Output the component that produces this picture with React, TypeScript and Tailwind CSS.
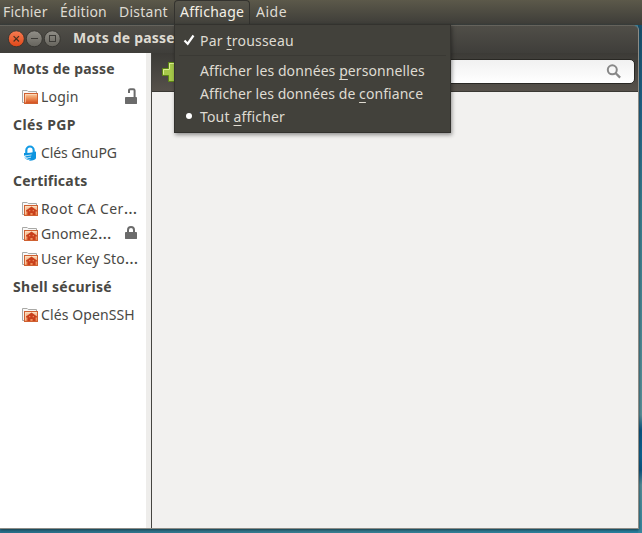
import type { ReactNode } from "react";

function Folder({ home = false }: { home?: boolean }) {
  return (
    <svg width="16" height="16" viewBox="0 0 16 16" className="shrink-0">
      <defs>
        <linearGradient id="folder" x1="0" y1="0" x2="0" y2="1">
          <stop offset="0" stopColor="#f9d0aa" />
          <stop offset="0.45" stopColor="#ee955c" />
          <stop offset="1" stopColor="#d24a1c" />
        </linearGradient>
        <linearGradient id="folder-home" x1="0" y1="0" x2="0" y2="1">
          <stop offset="0" stopColor="#fadcbc" />
          <stop offset="1" stopColor="#ea8048" />
        </linearGradient>
      </defs>
      <path d="M.5 13.5v-12h4.7l1 1h8.3V5" fill="#f8f8f8" stroke="#a9a9a6" />
      <path d="M.5 13.5H3" stroke="#a9a9a6" />
      <rect x="2.5" y="4.5" width="13" height="10" fill={home ? "url(#folder-home)" : "url(#folder)"} stroke="#cf6131" />
      <path d="M3.5 13.5v-8h11" fill="none" stroke="#ffe4c8" strokeOpacity=".6" />
      {home && <path d="M9.5 5.5 4 9.6v1h1.4V14h3v-2h2.2v2h3v-3.4H15v-1Z" fill="#c9401c" />}
      {home && <path d="M7 9.7h1.3m2.4 0H12" stroke="#eb9a6a" />}
    </svg>
  );
}

function GpgIcon() {
  return (
    <svg width="16" height="16" viewBox="0 0 16 16" className="shrink-0">
      <path d="M4.3 8V5.4a3.7 3.9 0 0 1 7.4 0V8" fill="none" stroke="#139be5" strokeWidth="2.2" />
      <path d="M2 8c4.2 0 8-.4 12-1.5v6.8c-.6 1.5-3.5 2.5-7.2 2.3l2-1-5 .1 2.4-1.2H2.6l2.5-1.3H2l2.5-1.4H2Z" fill="#0d94df" />
      <path d="m2.5 11 7-1.1M4 13.2l5-1.1" stroke="#fff" strokeWidth=".7" />
    </svg>
  );
}

function Lock({ open = false }: { open?: boolean }) {
  return (
    <svg width="12" height="18" viewBox="0 0 12 18" className="shrink-0">
      <path d={open ? "M4 5V2.6q0-1.4 1.4-1.4h2.8q1.4 0 1.4 1.4V10" : "M3 8V5a3 3 0 0 1 6 0v3"} fill="none" stroke="#6b6b6b" strokeWidth="2" />
      <rect y={open ? 9 : 7} width="12" height="7" rx=".4" fill="#6b6b6b" />
    </svg>
  );
}

function Heading({ children, spacing }: { children: ReactNode; spacing: string }) {
  return (
    <div className={`flex h-[31px] items-center pl-[13px] font-bold ${spacing}`}>{children}</div>
  );
}

type ItemProps = { icon: ReactNode; label: string; spacing: string; cut?: boolean; lock?: ReactNode };

function Item({ icon, label, spacing, cut = false, lock }: ItemProps) {
  return (
    <div className="flex h-[25px] items-center pl-[22px]">
      {icon}
      <span className={`ml-[3px] ${spacing}`}>
        {label}
        {cut && <span className="text-[17px] leading-none tracking-normal">…</span>}
      </span>
      {lock && <span className="mr-[9px] ml-auto">{lock}</span>}
    </div>
  );
}

function WindowButton({ kind }: { kind: "close" | "min" | "max" }) {
  return (
    <svg width="18" height="18" viewBox="0 0 18 18">
      <defs>
        <linearGradient id={`button-${kind}`} x1="0" y1="0" x2="0" y2="1">
          <stop offset="0" stopColor={kind === "close" ? "#f77c52" : "#918f88"} />
          <stop offset="1" stopColor={kind === "close" ? "#df4718" : "#65635c"} />
        </linearGradient>
      </defs>
      <circle cx="9.3" cy="8.8" r="8" fill={`url(#button-${kind})`} stroke="#34332f" strokeWidth=".9" />
      {kind === "close" && <path d="m6.6 6.1 5.4 5.4m0-5.4-5.4 5.4" stroke="#49301f" strokeWidth="1.2" />}
      {kind === "min" && <path d="M6 8.5h7" stroke="#3c3b37" />}
      {kind === "max" && <rect x="6.5" y="5.5" width="6" height="6" fill="none" stroke="#3c3b37" />}
    </svg>
  );
}

function Key({ children }: { children: string }) {
  return <span className="underline decoration-1 underline-offset-[3px] [text-decoration-skip-ink:none]">{children}</span>;
}

export default function App() {
  return (
    <div className="relative h-[533px] w-[642px] overflow-hidden bg-gradient-to-r from-[#28708c] via-[#397f93] to-[#2780a0] font-['Noto_Sans','Open_Sans',sans-serif] text-[14px] leading-[20px] whitespace-nowrap text-[#494844]">
      <div className="absolute top-[25px] right-0 h-[508px] w-[4px] bg-[linear-gradient(to_bottom,#174d6a_0,#205f85_80px,#397a8c_180px,#5b8e98_390px,#095281_405px,#0b6191_430px,#095281_445px,#568b97_460px,#34869f_508px)]" />
      <nav className="flex h-[25px] items-center bg-gradient-to-b from-[#5c594a] to-[#3d3c38] pb-[2px] pl-[3px] text-[#dfdbd2]">
        <span className="w-[57px] tracking-[0.15px]">Fichier</span>
        <span className="w-[59px] tracking-[0.15px]">Édition</span>
        <span className="w-[55px] tracking-[0.25px]">Distant</span>
        <span className="-mb-[2px] h-[25px] w-[76px] rounded-t-[4px] border border-b-0 border-[#33322e] bg-gradient-to-b from-[#57554b] to-[#42413b] pt-px pl-[5px] tracking-[0.25px] text-[#f4f0e6]">Affichage</span>
        <span className="pl-[6px] tracking-[0.5px]">Aide</span>
      </nav>
      <div className="relative flex h-[504px] w-[639px] flex-col rounded-tr-[5px] border-r border-b border-[#8d8c86] shadow-[0_1px_3px_#173946]">
        <header className="flex h-[28px] shrink-0 items-center rounded-tr-[5px] border-t border-[#65635c] bg-gradient-to-b from-[#504e48] to-[#3f3e3a] pb-[3px] pl-[7px]">
          <div className="flex pt-px">
            <WindowButton kind="close" />
            <WindowButton kind="min" />
            <WindowButton kind="max" />
          </div>
          <span className="ml-[12px] font-bold tracking-[0.2px] text-[#dfdbd2]">Mots de passe</span>
        </header>
        <div className="flex min-h-0 flex-1">
          <aside className="w-[146px] shrink-0 bg-white">
            <Heading spacing="tracking-[0.2px]">Mots de passe</Heading>
            <Item icon={<Folder />} label="Login" spacing="tracking-[0.2px]" lock={<Lock open />} />
            <Heading spacing="tracking-[0.4px]">Clés PGP</Heading>
            <Item icon={<GpgIcon />} label="Clés GnuPG" spacing="tracking-[-0.1px]" />
            <Heading spacing="tracking-[0.2px]">Certificats</Heading>
            <Item icon={<Folder home />} label="Root CA Cer" spacing="tracking-[0.4px]" cut />
            <Item icon={<Folder home />} label="Gnome2" spacing="tracking-[0.1px]" cut lock={<Lock />} />
            <Item icon={<Folder home />} label="User Key Sto" spacing="tracking-[0.1px]" cut />
            <Heading spacing="tracking-[0.3px]">Shell sécurisé</Heading>
            <Item icon={<Folder home />} label="Clés OpenSSH" spacing="tracking-[0.1px]" />
          </aside>
          <div className="w-[5px] shrink-0 bg-[#eeedeb]" />
          <main className="flex flex-1 flex-col border-l border-[#464541] bg-[#f2f1ef]">
            <div className="flex h-[39px] items-start border-b border-[#3b3934] bg-gradient-to-b from-[#3c3b37] to-[#56514b] pt-[6px]">
              <svg width="20" height="20" viewBox="0 0 20 20" className="mt-[3px] ml-[10px]">
                <path d="M6.5.5h7v6h6v7h-6v6h-7v-6h-6v-7h6Z" fill="#a6c94a" stroke="#5e8815" />
                <path d="M7.5 7V1.5h5m-11 11v-5h6" fill="none" stroke="#dcee92" />
              </svg>
              <div className="mr-[3px] ml-auto flex h-[25px] w-[340px] items-center justify-end rounded-[5px] border border-[#292824] bg-gradient-to-b from-[#f1f1f1] to-white pr-[12px]">
                <svg width="16" height="16" viewBox="0 0 16 16">
                  <circle cx="6.3" cy="5.8" r="4.5" fill="none" stroke="#888" strokeWidth="2" />
                  <path d="m9.5 9 4.6 4.6" stroke="#888" strokeWidth="2.3" />
                </svg>
              </div>
            </div>
          </main>
        </div>
      </div>
      <div className="absolute top-[24px] left-[174px] h-[109px] w-[277px] border border-[#33322e] bg-[#42413b] pt-[4px] text-[#dfdbd2] shadow-[1px_2px_4px_rgba(0,0,0,.4)]">
        <div className="flex h-[23px] items-center">
          <svg width="25" height="14" viewBox="0 0 25 14">
            <path d="m9.5 6.5 3.2 3.2L18.5 1.5" fill="none" stroke="#fff" strokeWidth="2.2" />
          </svg>
          <span className="tracking-[0.2px]">Par <Key>t</Key>rousseau</span>
        </div>
        <div className="mx-1 mt-[3px] mb-[3px] border-t border-[#3a3934]" />
        <div className="flex h-[23px] items-center pl-[25px]">
          <span className="tracking-[0.09px]">Afficher les données <Key>p</Key>ersonnelles</span>
        </div>
        <div className="flex h-[23px] items-center pl-[25px]">
          <span className="tracking-[0.07px]">Afficher les données de <Key>c</Key>onfiance</span>
        </div>
        <div className="flex h-[23px] items-center">
          <span className="-mt-px mr-[8px] ml-[11px] size-[6px] rounded-full bg-white" />
          <span className="tracking-[0.17px]">Tout <Key>a</Key>fficher</span>
        </div>
      </div>
    </div>
  );
}
